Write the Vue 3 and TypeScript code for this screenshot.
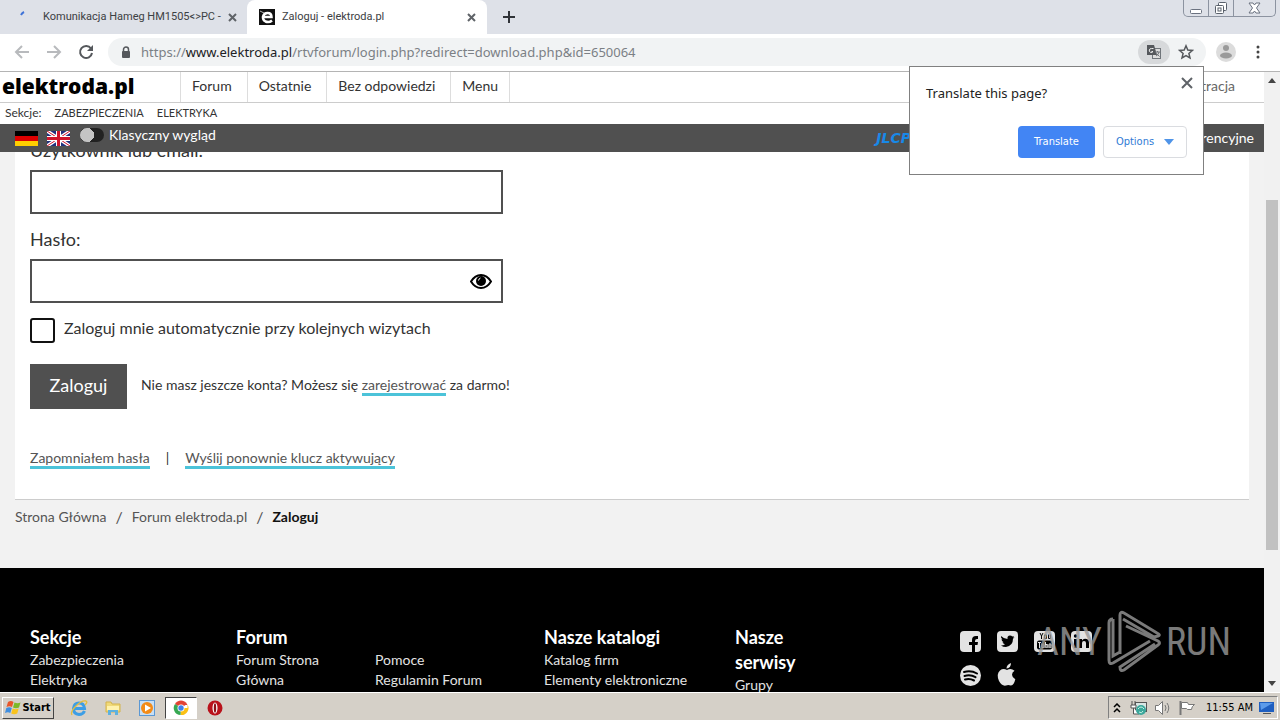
<script setup lang="ts">
import { ref } from 'vue'

const user = ref('')
const password = ref('')
const remember = ref(false)
const classic = ref(false)
const nav: string[] = ['Forum', 'Ostatnie', 'Bez odpowiedzi', 'Menu']
</script>

<template>
  <div class="screen">
    <header class="tabs">
      <div class="tab first">
        <svg class="spin" width="16" height="16" viewBox="0 0 16 16"><path d="M3 6q1-2 3-3" fill="none" stroke="#3f73d8" stroke-width="2" /></svg>
        <span class="tab-title">Komunikacja Hameg HM1505&lt;&gt;PC -</span>
        <button class="x" aria-label="Close tab"><svg width="9" height="9" viewBox="0 0 9 9"><path d="M1 1l7 7M8 1l-7 7" stroke="#5f6368" stroke-width="2" /></svg></button>
      </div>
      <div class="tab active">
        <svg width="16" height="16" viewBox="0 0 16 16"><rect width="16" height="16" fill="#111" /><path d="M13 11.500Q10 14 6.500 12.500Q3.500 11 4 7.500Q5 4 8.500 4Q12.500 4 12.500 8H5" fill="none" stroke="#fff" stroke-width="2.500" /><path d="M1 2l4 2" stroke="#bbb" /></svg>
        <span class="tab-title">Zaloguj - elektroda.pl</span>
        <button class="x" aria-label="Close tab"><svg width="9" height="9" viewBox="0 0 9 9"><path d="M1 1l7 7M8 1l-7 7" stroke="#5f6368" stroke-width="2" /></svg></button>
      </div>
      <button class="plus" aria-label="New tab"><svg width="12" height="12" viewBox="0 0 12 12"><path d="M6 0v12M0 6h12" stroke="#303338" stroke-width="2" /></svg></button>
      <div class="win">
        <button aria-label="Minimize"><svg width="13" height="14" viewBox="0 0 13 14"><rect x=".5" y="8.500" width="11" height="4" rx="1" fill="#fff" stroke="#6b7280" /></svg></button>
        <button aria-label="Restore"><svg width="14" height="14" viewBox="0 0 14 14"><rect x="4.500" y="1.500" width="8" height="8" rx="1" fill="#fff" stroke="#59606b" /><rect x="1.500" y="4.500" width="8" height="8" rx="1" fill="#fff" stroke="#59606b" /><rect x="4" y="7" width="3" height="3" fill="none" stroke="#59606b" /></svg></button>
        <button class="wide" aria-label="Close"><svg width="13" height="12" viewBox="0 0 13 12"><path d="M1 1h4l1.500 2L8 1h4L8.500 6 12 11H8L6.500 9 5 11H1l3.500-5z" fill="#fff" stroke="#6b7280" /></svg></button>
      </div>
    </header>

    <div class="toolbar">
      <button class="tool" aria-label="Back"><svg width="16" height="14" viewBox="0 0 16 14"><path d="M15 7H2M8 1L2 7l6 6" fill="none" stroke="#b8babd" stroke-width="2" /></svg></button>
      <button class="tool" aria-label="Forward"><svg width="16" height="14" viewBox="0 0 16 14"><path d="M1 7h13M8 1l6 6-6 6" fill="none" stroke="#b8babd" stroke-width="2" /></svg></button>
      <button class="tool" aria-label="Reload"><svg width="16" height="16" viewBox="0 0 16 16"><path d="M13 4.500A6 6 0 1 0 14 9" fill="none" stroke="#55585c" stroke-width="2" /><path d="M15 1v6H9z" fill="#55585c" /></svg></button>
      <div class="address">
        <svg class="lock" width="10" height="13" viewBox="0 0 10 13"><rect x="1" y="5" width="8" height="7" rx="1" fill="#55585c" /><path d="M2.500 6V3.500a2.500 2.500 0 0 1 5 0V6" fill="none" stroke="#55585c" stroke-width="1.500" /></svg>
        <span class="url">https://<b>www.elektroda.pl</b>/rtvforum/login.php?redirect=download.php&amp;id=650064</span>
        <button class="trans" aria-label="Translate this page"><svg width="16" height="16" viewBox="0 0 16 16"><rect x="6.500" y="4.500" width="8" height="10" fill="#ddd" stroke="#70757a" /><path d="M1 1h7l3 10H1z" fill="#55585c" /><path d="M7.500 4.500H5.500a2 2 0 1 0 1.500 3H5.500" fill="none" stroke="#eee" /><path d="M9 8h5M11.500 7v1M13 8q-.5 3-3 4M10.500 9.500l3 3" fill="none" stroke="#70757a" /></svg></button>
        <button class="star" aria-label="Bookmark"><svg width="16" height="16" viewBox="0 0 16 16"><path d="M8 1.800l1.800 4.200 4.600.4-3.500 3 1.100 4.500L8 11.500l-4 2.400 1.100-4.500-3.500-3 4.600-.4z" fill="none" stroke="#55585c" stroke-width="1.500" /></svg></button>
      </div>
      <button class="tool me" aria-label="Profile"><svg width="20" height="20" viewBox="0 0 20 20"><circle cx="10" cy="10" r="10" fill="#dcdcdc" /><circle cx="10" cy="6" r="3" fill="#9a9a9a" /><ellipse cx="10" cy="13.500" rx="6" ry="3" fill="#9a9a9a" /></svg></button>
      <button class="tool dots" aria-label="Menu"><svg width="4" height="14" viewBox="0 0 4 14"><circle cx="2" cy="2" r="1.500" fill="#444" /><circle cx="2" cy="7" r="1.500" fill="#444" /><circle cx="2" cy="12" r="1.500" fill="#444" /></svg></button>
    </div>

    <div class="viewport">
      <main class="page">
        <nav class="nav">
          <a class="logo" href="#">elektroda.pl</a>
          <a v-for="n in nav" :key="n" class="item" href="#">{{ n }}</a>
          <a class="reg" href="#">Rejestracja</a>
        </nav>
        <nav class="sections">
          <span>Sekcje:</span><a href="#">ZABEZPIECZENIA</a><a href="#">ELEKTRYKA</a>
        </nav>
        <div class="bar">
          <a href="#" aria-label="Deutsch" class="flag"><svg width="23" height="15" viewBox="0 0 23 15"><path d="M0 0h23v5H0z" fill="#000" /><path d="M0 5h23v5H0z" fill="#d00" /><path d="M0 10h23v5H0z" fill="#ffce00" /></svg></a>
          <a href="#" aria-label="English" class="flag"><svg width="23" height="15" viewBox="0 0 23 15"><path d="M0 0h23v15H0z" fill="#20307c" /><path d="M0 0l23 15M23 0L0 15" stroke="#fff" stroke-width="3.500" /><path d="M0 0l23 15M23 0L0 15" stroke="#cf142b" stroke-width="1" /><path d="M11.500 0v15M0 7.500h23" stroke="#fff" stroke-width="5" /><path d="M11.500 0v15M0 7.500h23" stroke="#cf142b" stroke-width="3" /></svg></a>
          <label class="classic"><input v-model="classic" type="checkbox" class="switch" />Klasyczny wygląd</label>
          <a class="jlc" href="#">JLCPCB</a>
          <span class="conf">Materiały konferencyjne</span>
        </div>

        <div class="scrolled">
          <form class="panel" @submit.prevent>
            <label class="field-label" for="user">Użytkownik lub email:</label>
            <input id="user" v-model="user" class="field" type="text" />
            <label class="field-label" for="pass">Hasło:</label>
            <div class="pass">
              <input id="pass" v-model="password" class="field" type="password" />
              <button type="button" class="eye" aria-label="Pokaż hasło"><svg width="22" height="15" viewBox="0 0 22 15"><path d="M1 7.500Q5 1 11 1t10 6.500Q17 14 11 14T1 7.500z" fill="#fff" stroke="#000" stroke-width="2" /><circle cx="11" cy="7" r="5" fill="#000" /><path d="M8.500 6.500q.3-2 2-2.500" fill="none" stroke="#fff" /></svg></button>
            </div>
            <label class="remember"><input v-model="remember" type="checkbox" />Zaloguj mnie automatycznie przy kolejnych wizytach</label>
            <div class="submit">
              <button class="login" type="submit">Zaloguj</button>
              <p>Nie masz jeszcze konta? Możesz się <a href="#">zarejestrować</a> za darmo!</p>
            </div>
            <div class="links"><a href="#">Zapomniałem hasła</a><span>|</span><a href="#">Wyślij ponownie klucz aktywujący</a></div>
          </form>
          <nav class="crumbs"><a href="#">Strona Główna</a><i>/</i><a href="#">Forum elektroda.pl</a><i>/</i><strong>Zaloguj</strong></nav>
        </div>

        <footer class="footer">
          <section><h2>Sekcje</h2><a href="#">Zabezpieczenia</a><a href="#">Elektryka</a></section>
          <section><h2>Forum</h2><a class="narrow" href="#">Forum Strona Główna</a></section>
          <section class="second"><a href="#">Pomoce</a><a href="#">Regulamin Forum</a></section>
          <section><h2>Nasze katalogi</h2><a href="#">Katalog firm</a><a href="#">Elementy elektroniczne</a></section>
          <section><h2 class="narrow">Nasze serwisy</h2><a href="#">Grupy</a></section>
          <section class="social">
            <a href="#" aria-label="Facebook"><svg viewBox="0 0 22 22"><rect width="21" height="21" rx="4" fill="#e3e3e3" /><path d="M12 21v-7H9v-3h3V9q0-4 4-4h2v3h-1q-2 0-2 2v1h3l-.5 3H15v7z" fill="#000" /></svg></a>
            <a href="#" aria-label="Twitter"><svg viewBox="0 0 22 22"><rect width="21" height="21" rx="4" fill="#e3e3e3" /><path d="M4 5q3 3 6.500 3Q10 4.500 13 4.500q1.500 0 2.300 1L17 5l-1 1.500 1.500-.3-1.500 1.600Q16 15 9 16q-3 0-5-1.500 2.500 0 4-1.200-2-.3-2.500-2h1.200Q4.500 10.500 4.500 8l1 .4Q3.500 7 4 5z" fill="#000" /></svg></a>
            <a href="#" aria-label="YouTube"><svg viewBox="0 0 22 22"><rect width="21" height="21" rx="4" fill="#e3e3e3" /><path d="M6 2l1.500 3v3M9 2L7.500 5M10.500 4h2v3.500h-2zM14.500 3.500v4h2v-4" fill="none" stroke="#000" /><rect x="3" y="9.500" width="15" height="9" rx="2" fill="#000" /><path d="M4 11.500h3M5.500 11.500V17M8 12.500V16.500h2v-4M11.500 11v5.500h2v-3h-2M17 16.500h-2v-3.500h2v2h-2" fill="none" stroke="#e3e3e3" /></svg></a>
            <a href="#" aria-label="LinkedIn"><svg viewBox="0 0 22 22"><rect width="21" height="21" rx="4" fill="#e3e3e3" /><path d="M3 8h3v9H3zM8 8h3v1.500q1-1.700 3-1.700 4 0 4 4V17h-3v-5q0-2-2-2t-2 2v5H8z" fill="#000" /><circle cx="4.500" cy="5" r="1.700" fill="#000" /></svg></a>
            <a href="#" aria-label="Spotify"><svg viewBox="0 0 22 22"><circle cx="10.500" cy="10.500" r="10.500" fill="#e3e3e3" /><path d="M4 7q7-2 13 1.500M4.500 11q6-1.700 11 1.200M5 14.500q5-1.200 9 1" fill="none" stroke="#000" stroke-width="2" stroke-linecap="round" /></svg></a>
            <a href="#" aria-label="Apple"><svg viewBox="0 0 22 22"><path d="M14-2q0 5-4.500 5.500Q9.500-.5 14-2zM10 5q4-2.500 7.500.7-2.500 1.500-2.500 4t3.300 4.500Q17 20 14 20.500q-3-1.200-5 0Q5 21.500 2 16-1 9 3 5.500 6 3 10 5z" fill="#e3e3e3" /></svg></a>
          </section>
        </footer>

        <div class="watermark">
          <span>ANY</span>
          <svg width="56" height="64" viewBox="0 0 56 64"><path d="M14 44V5q0-4 4-2l33 20q4 2 1 3l-4 1-31-18M7 9q-4 0-4 4v37q0 5 4 3l37-22M20 16l32 15q3 2 0 4L18 60q-4 2-4-3l35-23M7 9v37l7-4" fill="none" stroke="#999" stroke-width="3" /></svg>
          <span>RUN</span>
        </div>
      </main>
      <div class="scroll" aria-hidden="true">
        <svg width="16" height="16" viewBox="0 0 16 16"><path d="M4 11l4-5 4 5z" fill="#444" /></svg>
        <div class="track"><div class="thumb"></div></div>
        <svg width="16" height="16" viewBox="0 0 16 16"><path d="M4 5l4 5 4-5z" fill="#444" /></svg>
      </div>

      <div class="bubble" role="dialog" aria-label="Translate">
        <p>Translate this page?</p>
        <button class="bx" aria-label="Close"><svg width="12" height="12" viewBox="0 0 12 12"><path d="M1 1l10 10M11 1L1 11" stroke="#5f6368" stroke-width="2" /></svg></button>
        <div class="actions">
          <button class="go">Translate</button>
          <button class="opt">Options <svg width="10" height="6" viewBox="0 0 10 6"><path d="M0 0h10L5 6z" fill="#4f94e8" /></svg></button>
        </div>
      </div>
    </div>

    <footer class="taskbar">
      <button class="start"><svg width="17" height="17" viewBox="0 0 17 17"><path d="M3 3q3-2 5.500 0L7 8Q4.500 6.500 1.500 8z" fill="#e8562a" /><path d="M9.500 3.500q3 1.500 6 0L14 8.500q-3 1.500-6 0z" fill="#7db928" /><path d="M1.300 9q3-1.500 5.500 0l-1.500 5Q3 12.500 0 14z" fill="#3f8ee0" /><path d="M7.700 9.500q3 1.500 6 0l-1.500 5q-3 1.500-6 0z" fill="#f9c31c" /></svg>Start</button>
      <button class="app" aria-label="Internet Explorer"><svg width="18" height="18" viewBox="0 0 18 18"><path d="M14.500 12Q13 15.500 9 15.500 3.500 15 3.500 9.500 4 4 9 4q5 0 5.500 5.500H5" fill="none" stroke="#3d9ee5" stroke-width="3" /><path d="M2 16Q0 13 6 7T16 2q2 1-1 4" fill="none" stroke="#e4bd3c" stroke-width="1.300" /></svg></button>
      <button class="app" aria-label="Explorer"><svg width="18" height="18" viewBox="0 0 18 18"><path d="M2 3h5l1 2h8v8H2z" fill="#f0d978" stroke="#d4b34c" /><path d="M3 7h12v4H3z" fill="#fff2ae" /><path d="M4 16v-5h10v5h-3v-3H7v3z" fill="#5eb1df" /></svg></button>
      <button class="app" aria-label="Media Player"><svg width="18" height="18" viewBox="0 0 18 18"><rect x="1.500" y="1.500" width="15" height="15" fill="#c8dff4" stroke="#5b98d4" /><circle cx="9" cy="9" r="6" fill="#f38b17" /><path d="M7 5.500L13 9l-6 3.500z" fill="#fff" /></svg></button>
      <button class="app on" aria-label="Chrome"><svg width="16" height="16" viewBox="0 0 16 16"><path d="M8 8L2 4a7 7 0 0 1 12 0z" fill="#e14234" /><path d="M8 8h6.500V4.500A7 7 0 0 1 7.500 15z" fill="#fbc116" /><path d="M8 8l-.5 7A7 7 0 0 1 2 4z" fill="#36a852" /><path d="M8 4.500h6.200" stroke="#e14234" stroke-width="1" /><circle cx="8" cy="8" r="3.500" fill="#fff" /><circle cx="8" cy="8" r="2.700" fill="#3f80ea" /></svg></button>
      <button class="app" aria-label="Opera"><svg width="18" height="18" viewBox="0 0 18 18"><circle cx="9" cy="9" r="7.500" fill="#b9121b" /><ellipse cx="9" cy="9" rx="2.500" ry="5.500" fill="#fff" /><ellipse cx="9" cy="9" rx="1.200" ry="4.800" fill="#8b1016" /></svg></button>
      <div class="tray">
        <svg class="chev" width="8" height="10" viewBox="0 0 8 10"><path d="M1 4l3-3 3 3M1 9l3-3 3 3" fill="none" stroke="#000" stroke-width="1.500" /></svg>
        <svg width="18" height="16" viewBox="0 0 18 16"><rect x="5.500" y="2.500" width="11" height="9" fill="#d8e6e4" stroke="#555" /><path d="M2 1v4M5 1v4M1 5h5v3H1zM3.500 8v6H9" fill="#fff" stroke="#555" /><circle cx="11" cy="10" r="5" fill="#3ba79b" /><path d="M8 9q3-4 6 0M9 12q3 2 4-1" fill="none" stroke="#c8f2e5" /></svg>
        <svg width="18" height="16" viewBox="0 0 18 16"><path d="M1.500 5.500h3l4-4v13l-4-4h-3z" fill="#fff" stroke="#777" /><path d="M11 5q2 3 0 6M13 3q3.500 5 0 10" fill="none" stroke="#777" /></svg>
        <svg width="18" height="16" viewBox="0 0 18 16"><path d="M2.500 1v14" stroke="#777" stroke-width="2" /><path d="M3.500 2.500h6l1 2h6q-3 2-3 5h-4l-1-1h-5z" fill="#fff" stroke="#777" /></svg>
        <time>11:55 AM</time>
        <svg width="16" height="14" viewBox="0 0 16 14"><path d="M0 1h15v10H0z" fill="#1f5fc0" /><path d="M1 2h13L2 9z" fill="#5c9bea" /><path d="M4 12h8v1H4z" fill="#555" /></svg>
      </div>
    </footer>
  </div>
</template>

<style>
body { margin: 0; overflow: hidden; }
</style>

<style scoped>
* { box-sizing: border-box; }
button { font: inherit; color: inherit; border: 0; background: none; padding: 0; display: flex; align-items: center; justify-content: center; }
a { color: inherit; text-decoration: none; }
svg { flex: none; display: block; }
p, h2 { margin: 0; }
.screen { height: 100vh; display: flex; flex-direction: column; background: #fff; font: 11px/14px "DejaVu Sans Condensed", "Noto Sans", sans-serif; color: #333; }
.tabs { height: 34px; flex: none; display: flex; background: #dee1e8; }
.tab { height: 34px; display: flex; align-items: center; padding: 0 9px 0 12px; }
.first { width: 247px; padding-left: 18px; padding-right: 8px; }
.tab.active { width: 240px; background: #fff; border-radius: 8px 8px 0 0; }
.tab-title { flex: 1; margin-left: 7px; white-space: nowrap; font-family: Roboto, sans-serif; color: #3c4043; }
.first .tab-title { margin-left: 9px; }
.x { width: 14px; height: 14px; }
.plus { width: 44px; height: 34px; }
.win { margin-left: auto; margin-right: 4px; height: 17px; display: flex; border: 1px solid #8c93a0; border-top: 0; border-radius: 0 0 5px 5px; }
.win button { width: 25px; height: 16px; border-right: 1px solid #8c93a0; }
.win .wide { width: 41px; border: 0; }
.toolbar { height: 38px; flex: none; display: flex; align-items: center; padding: 0 6px 1px; border-bottom: 1px solid #b4b4b4; }
.tool { width: 32px; height: 32px; }
.address { flex: 1; height: 28px; margin: 0 6px; margin-right: 4px; border-radius: 14px; background: #f1f3f4; display: flex; align-items: center; padding: 0 4px 0 13px; }
.url { flex: 1; margin-left: 10px; font: 13px/20px "Noto Sans", sans-serif; color: #7b8085; white-space: nowrap; overflow: hidden; }
.url b { font-weight: 400; color: #202124; }
.trans { width: 32px; height: 24px; border-radius: 12px; background: #d7d9db; }
.star { width: 32px; height: 24px; }
.viewport { flex: 1; min-height: 0; display: flex; position: relative; }
.page { flex: 1; min-width: 0; position: relative; display: flex; flex-direction: column; overflow: hidden; background: #f2f2f2; font-family: Lato, sans-serif; }
.nav { height: 31px; flex: none; display: flex; background: #fff; border-bottom: 1px solid #ccc; font-size: 14px; line-height: 28px; color: #333; }
.logo { width: 181px; padding-left: 2px; font: 800 21px/28px "Open Sans", sans-serif; color: #000; border-right: 1px solid #ddd; }
.item { padding: 0 15px 0 11px; border-right: 1px solid #ddd; }
.item:nth-of-type(5) { padding-right: 11px; }
.reg { margin-left: auto; padding-right: 29px; color: #666; }
.sections { height: 21px; flex: none; display: flex; gap: 13px; padding-left: 5px; background: #fff; font-size: 12px; line-height: 20px; }
.sections a { font-size: 11px; }
.bar { height: 28px; flex: none; display: flex; align-items: center; padding: 0 10px 0 15px; gap: 9px; background: #505050; color: #fff; font-size: 14px; line-height: 22px; }
.classic { display: flex; align-items: center; gap: 5px; height: 22px; margin-left: 1px; align-self: flex-start; }
.switch { appearance: none; margin: 0; width: 24px; height: 14px; border-radius: 7px; background: radial-gradient(circle at 7px 7px, #c4c4c4 7px, #222 7px); }
.jlc { margin-left: auto; margin-right: 164px; font: italic 700 14px/28px "DejaVu Sans", sans-serif; color: #1789e8; }
.conf { line-height: 28px; }
.scrolled { flex: 1; min-height: 0; overflow: hidden; padding: 0 15px; }
.panel { margin-top: -13px; padding: 0 15px; height: 361px; background: #fff; border-bottom: 1px solid #ccc; }
.field-label { display: block; height: 31px; font-size: 18px; line-height: 22px; color: #333; }
.field { display: block; width: 100%; height: 44px; border: 2px solid #505050; background: #fff; padding: 0 12px; font: 18px Lato, sans-serif; outline: 0; }
#user, .pass { width: 473px; max-width: 100%; margin-bottom: 14px; }
.pass { position: relative; }
.eye { position: absolute; right: 11px; top: 15px; }
.remember { display: flex; gap: 9px; height: 26px; font-size: 16px; line-height: 22px; }
.remember input { appearance: none; margin: 1px 0 0; width: 25px; height: 25px; border: 2px solid #111; border-radius: 3px; background: #fff; }
.submit { display: flex; gap: 14px; margin-top: 21px; font-size: 14px; line-height: 42px; }
.login { width: 97px; height: 45px; padding-bottom: 4px; background: #505050; color: #fff; font-size: 18px; }
.submit a, .links a { border-bottom: 3px solid #4cc3d9; color: #555; }
.links { display: flex; gap: 16px; margin-top: 41px; font-size: 14px; line-height: 16px; color: #333; }
.crumbs { display: flex; gap: 9px; padding-top: 8px; font-size: 14px; line-height: 18px; color: #555; }
.crumbs i { font-style: normal; font-size: 16px; }
.crumbs strong { color: #111; }
.footer { height: 124px; flex: none; display: grid; grid-template-columns: 206fr 139fr 169fr 191fr 224fr 305fr; padding: 57px 0 0 30px; background: #000; color: #e3e3e3; font-size: 14px; line-height: 20px; overflow: hidden; }
.footer h2 { font-size: 18px; line-height: 25px; color: #fff; }
.footer section > a { display: block; white-space: nowrap; }
.footer section > .narrow { max-width: 100px; white-space: normal; }
.footer h2.narrow { max-width: 80px; }
.footer .second { padding-top: 25px; }
.footer .social { display: grid; grid-template-columns: repeat(4, 22px); column-gap: 15px; row-gap: 12px; align-content: start; padding-top: 6px; padding-left: 1px; }
.social svg { width: 22px; height: 22px; overflow: visible; }
.watermark { position: absolute; right: 33px; bottom: 18px; display: flex; align-items: center; gap: 4px; color: #999; opacity: .8; font: 38px/64px "Liberation Sans Narrow", "Roboto Condensed", "Liberation Sans", sans-serif; pointer-events: none; }
.scroll { width: 16px; display: flex; flex-direction: column; background: #f1f1f1; }
.track { flex: 1; padding: 112px 2px 0; }
.thumb { height: 350px; background: #c1c1c1; }
.bubble { position: absolute; right: 76px; top: -6px; width: 295px; height: 109px; padding: 17px 16px 0; border: 1px solid #808080; background: #fff; }
.bubble p { font: 13px/18px "Noto Sans", sans-serif; color: #222; }
.bx { position: absolute; right: 10px; top: 10px; }
.actions { display: flex; justify-content: flex-end; gap: 8px; margin-top: 24px; }
.go { width: 77px; height: 32px; border-radius: 4px; background: #4285f4; color: #fff; }
.opt { width: 84px; height: 32px; gap: 10px; border: 1px solid #dadce0; border-radius: 4px; color: #2f7bd5; }
.taskbar { height: 28px; flex: none; display: flex; align-items: center; padding: 2px 2px 0; background: #d5d0c8; border-top: 1px solid #fff; color: #000; }
.start { width: 52px; height: 22px; margin-right: 9px; border: 1px solid; border-color: #fff #444 #444 #fff; font: 700 11px/14px "DejaVu Sans Condensed", sans-serif; }
.app { width: 32px; height: 22px; margin-right: 2px; }
.on { background: #fff; border: 1px solid; border-color: #444 #fff #fff #444; }
.tray { margin-left: auto; height: 23px; display: flex; align-items: center; gap: 6px; padding: 0 2px 0 4px; border: 1px solid; border-color: #808080 #fff #fff #808080; }
.chev { margin-right: 3px; }
.tray time { margin-left: 4px; }
</style>
